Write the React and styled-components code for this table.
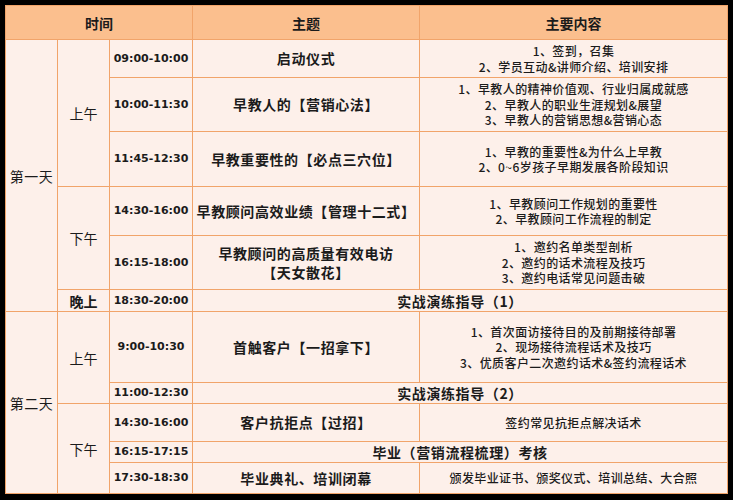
import React from 'react';
import styled, { createGlobalStyle } from 'styled-components';

const GlobalStyle = createGlobalStyle`
	html, body {
		margin: 0;
		padding: 0;
		background: #000;
	}
	body {
		font-family: 'Noto Sans CJK SC', 'Noto Sans', sans-serif;
		color: #1b1b1b;
	}
`;

const schedule = [
	{
		day: '第一天',
		periods: [
			{
				name: '上午',
				slots: [
					{ time: '09:00-10:00', h: 38, topic: ['启动仪式'], content: ['1、签到，召集', '2、学员互动&讲师介绍、培训安排'] },
					{
						time: '10:00-11:30',
						h: 54,
						topic: ['早教人的【营销心法】'],
						content: ['1、早教人的精神价值观、行业归属成就感', '2、早教人的职业生涯规划&展望', '3、早教人的营销思想&营销心态'],
					},
					{
						time: '11:45-12:30',
						h: 55,
						topic: ['早教重要性的【必点三穴位】'],
						content: ['1、早教的重要性&为什么上早教', '2、0~6岁孩子早期发展各阶段知识'],
					},
				],
			},
			{
				name: '下午',
				slots: [
					{
						time: '14:30-16:00',
						h: 49,
						topic: ['早教顾问高效业绩【管理十二式】'],
						content: ['1、早教顾问工作规划的重要性', '2、早教顾问工作流程的制定'],
					},
					{
						time: '16:15-18:00',
						h: 54,
						topic: ['早教顾问的高质量有效电访', '【天女散花】'],
						content: ['1、邀约名单类型剖析', '2、邀约的话术流程及技巧', '3、邀约电话常见问题击破'],
					},
				],
			},
			{
				name: '晚上',
				bold: true,
				slots: [{ time: '18:30-20:00', h: 22, practice: '实战演练指导（1）' }],
			},
		],
	},
	{
		day: '第二天',
		periods: [
			{
				name: '上午',
				slots: [
					{
						time: '9:00-10:30',
						h: 71,
						topic: ['首触客户【一招拿下】'],
						content: ['1、首次面访接待目的及前期接待部署', '2、现场接待流程话术及技巧', '3、优质客户二次邀约话术&签约流程话术'],
					},
					{ time: '11:00-12:30', h: 21, practice: '实战演练指导（2）' },
				],
			},
			{
				name: '下午',
				slots: [
					{ time: '14:30-16:00', h: 38, topic: ['客户抗拒点【过招】'], content: ['签约常见抗拒点解决话术'] },
					{ time: '16:15-17:15', h: 21, practice: '毕业（营销流程梳理）考核' },
					{ time: '17:30-18:30', h: 31, topic: ['毕业典礼、培训闭幕'], content: ['颁发毕业证书、颁奖仪式、培训总结、大合照'] },
				],
			},
		],
	},
];

const App = () => {
	const rows = [];

	schedule.forEach(({ day, periods }) => {
		const dayCount = periods.reduce((n, p) => n + p.slots.length, 0);
		periods.forEach((period, pi) => {
			period.slots.forEach((slot, si) => {
				rows.push(
					<Row key={`${day}-${period.name}-${slot.time}`} style={{ height: slot.h }}>
						{pi === 0 && si === 0 && <DayCell rowSpan={dayCount}>{day}</DayCell>}
						{si === 0 && (
							<PeriodCell rowSpan={period.slots.length} $bold={period.bold}>
								{period.name}
							</PeriodCell>
						)}
						<TimeCell>{slot.time}</TimeCell>
						{slot.practice ? (
							<PracticeCell colSpan={2}>{slot.practice}</PracticeCell>
						) : (
							<>
								<TopicCell>
									{slot.topic.map(line => (
										<Line key={line}>{line}</Line>
									))}
								</TopicCell>
								<ContentCell>
									{slot.content.map(line => (
										<Line key={line}>{line}</Line>
									))}
								</ContentCell>
							</>
						)}
					</Row>
				);
			});
		});
	});

	return (
		<React.Fragment>
			<GlobalStyle />
			<Frame>
				<Table>
					<colgroup>
						<col style={{ width: 52 }} />
						<col style={{ width: 52 }} />
						<col style={{ width: 83 }} />
						<col style={{ width: 227 }} />
						<col style={{ width: 308 }} />
					</colgroup>
					<thead>
						<Row style={{ height: 34 }}>
							<HeadCell colSpan={3}>时间</HeadCell>
							<HeadCell>主题</HeadCell>
							<HeadCell>主要内容</HeadCell>
						</Row>
					</thead>
					<tbody>{rows}</tbody>
				</Table>
			</Frame>
		</React.Fragment>
	);
};

export default App;

const Frame = styled.div`
	width: 733px;
	height: 500px;
	padding: 5px 6px 7px 5px;
	box-sizing: border-box;
	background: #000;
`;

const Table = styled.table`
	width: 722px;
	height: 488px;
	table-layout: fixed;
	border-collapse: collapse;
	background: #fdf0ea;
`;

const Row = styled.tr``;

const Cell = styled.td`
	border: 1px solid #f1a46a;
	padding: 0;
	text-align: center;
	vertical-align: middle;
	line-height: 16px;
	color: #1b1b1b;
`;

const HeadCell = styled(Cell).attrs({ as: 'th' })`
	background: #fbbf8e;
	font-size: 14px;
	font-weight: 700;
`;

const DayCell = styled(Cell)`
	font-size: 14px;
	font-weight: 400;
	letter-spacing: 0.5px;
`;

const PeriodCell = styled(Cell)`
	font-size: 14px;
	font-weight: ${props => (props.$bold ? 700 : 400)};
`;

const TimeCell = styled(Cell)`
	font-family: 'DejaVu Sans', Verdana, sans-serif;
	font-size: 11px;
	font-weight: 700;
`;

const TopicCell = styled(Cell)`
	font-size: 14px;
	font-weight: 700;
	letter-spacing: 0.6px;
	line-height: 19px;
`;

const ContentCell = styled(Cell)`
	font-size: 12px;
	font-weight: 500;
	letter-spacing: 0.4px;
	line-height: 15.5px;
`;

const PracticeCell = styled(Cell)`
	font-size: 14px;
	font-weight: 700;
	letter-spacing: 0.6px;
`;

const Line = styled.div``;
